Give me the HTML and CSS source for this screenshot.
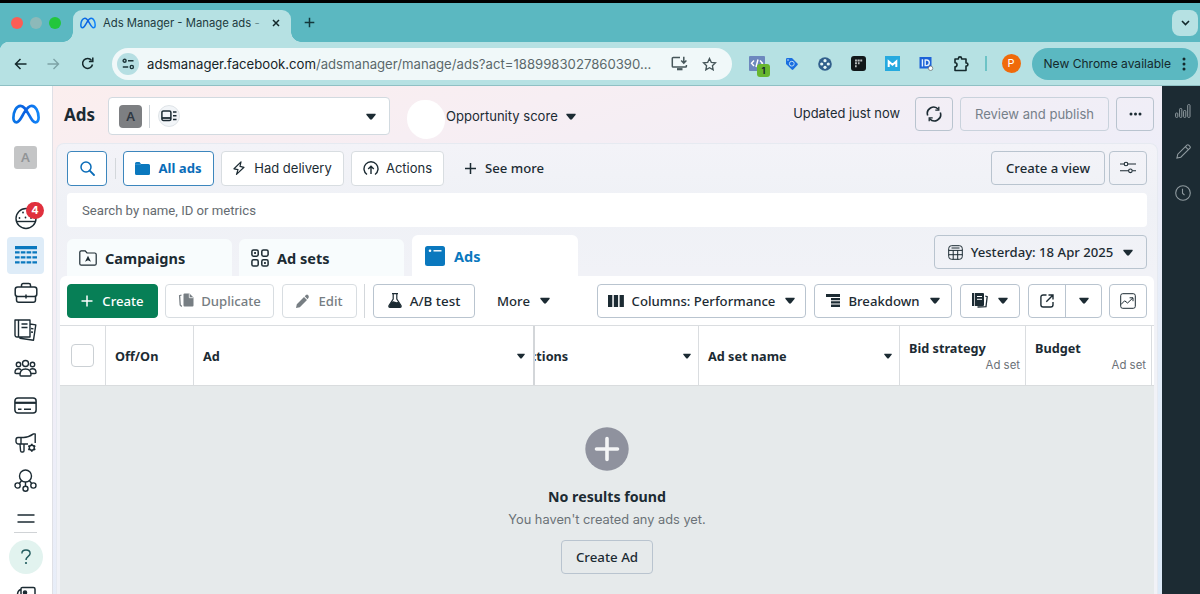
FILE: index.html
```html
<!DOCTYPE html>
<html lang="en">
<head>
<meta charset="utf-8">
<title>Ads Manager - Manage ads</title>
<link rel="stylesheet" href="styles.css">
</head>
<body>
<svg width="0" height="0" class="defs">
  <defs>
    <linearGradient id="mg" x1="0" x2="1"><stop offset="0" stop-color="#0a78e8"/><stop offset=".45" stop-color="#0a5fe0"/><stop offset="1" stop-color="#1288fa"/></linearGradient>
    <symbol id="meta" viewBox="0 0 28 20"><path d="M4.5 18.3C2.4 18.3 1.4 16.5 1.4 13.7 1.4 8 4.2 1.8 8.5 1.8c3.3 0 5.3 3.4 7.9 8 2.8 5 4.3 8.5 7 8.5 2.2 0 3.2-1.9 3.2-4.8 0-6-3-11.7-6.9-11.7-3 0-5 2.7-7.4 6.6-3.2 5.3-4.8 9.9-7.800 9.9z" fill="none" stroke="url(#mg)" stroke-width="2.700"/></symbol>
    <symbol id="caret" viewBox="0 0 10 7"><path d="M1 .7h8c.7 0 1 .7.5 1.200L6 6.200c-.6.6-1.400.6-2 0L.5 1.900C0 1.400.3.7 1 .7z" fill="#1c2b33"/></symbol>
  </defs>
</svg>
<div class="window">
  <div class="tabstrip">
    <i class="light red"></i><i class="light gray"></i><i class="light green"></i>
    <div class="tab">
      <svg class="fav" width="16" height="12"><use href="#meta"/></svg>
      <span class="tab-title">Ads Manager - Manage ads <em>-</em></span>
      <svg width="8" height="8" viewBox="0 0 8 8"><path d="M1 1l6 6M7 1l-6 6" stroke="#13282b" stroke-width="1.500"/></svg>
    </div>
    <svg class="newtab" width="11" height="11" viewBox="0 0 11 11"><path d="M5.500.7v9.600M.7 5.500h9.600" stroke="#13383c" stroke-width="1.500"/></svg>
    <div class="tabsearch"><svg width="9" height="6" viewBox="0 0 9 6"><path d="M1 1l3.500 3.500L8 1" fill="none" stroke="#13282b" stroke-width="1.600"/></svg></div>
  </div>
  <div class="toolbar">
    <svg class="nav-back" width="13" height="12" viewBox="0 0 13 12"><path d="M6.500 1L1.500 6l5 5M1.500 6H12.500" fill="none" stroke="#14292c" stroke-width="1.500"/></svg>
    <svg class="nav-fwd" width="13" height="12" viewBox="0 0 13 12"><path d="M6.500 1l5 5-5 5M11.500 6H.5" fill="none" stroke="#7da3a6" stroke-width="1.400"/></svg>
    <svg class="nav-reload" width="13" height="13" viewBox="0 0 13 13"><path d="M11.500 7.500A5 5 0 1 1 10.600 3.400M11.800.6V4.500H7.900" fill="none" stroke="#14292c" stroke-width="1.500"/></svg>
    <div class="omnibox">
      <div class="site"><svg width="13" height="12" viewBox="0 0 13 12" fill="none" stroke="#1b3438" stroke-width="1.400"><circle cx="2.600" cy="2.800" r="1.500"/><path d="M6 2.800h5.500M.8 9h5.400"/><circle cx="9.800" cy="9" r="1.600"/></svg></div>
      <span class="url">adsmanager.facebook.com<em>/adsmanager/manage/ads?act=1889983027860390...</em></span>
      <svg class="install" width="17" height="15" viewBox="0 0 17 15" fill="none" stroke="#46565a" stroke-width="1.500"><path d="M9 1.500H2.200a.9.900 0 0 0-.9.900v7.800c0 .5.400.9.900.9h12.300c.5 0 .9-.4.900-.9V9"/><path d="M12.800.8v6M10.200 4.500l2.600 2.600 2.600-2.600"/><path d="M6 13.200h5.500" stroke-width="2.200"/></svg>
      <svg width="15" height="14" viewBox="0 0 15 14"><path d="M7.500 1.400l1.800 3.900 4.200.5-3.100 2.900.8 4.200-3.700-2.100-3.700 2.100.8-4.200L1.500 5.800l4.200-.5z" fill="none" stroke="#46565a" stroke-width="1.300"/></svg>
    </div>
    <div class="exts">
      <div class="ext code"><svg width="16" height="16" viewBox="0 0 16 16"><rect width="16" height="15" rx="1" fill="#6d88be"/><path d="M5 4.500L2.500 7.300 5 10M11 4.500l2.500 2.800L11 10M9 3.500l-2 7.500" fill="none" stroke="#fff" stroke-width="1.400"/></svg><b>1</b></div>
      <svg class="ext tag" width="14" height="14" viewBox="0 0 14 14"><path d="M1 2.200Q1 1 2.200 1H7l5.500 5.500q.8.800 0 1.600l-4.200 4.400q-.8.800-1.600 0L1 7z" fill="#1a6fe0"/><circle cx="6.800" cy="6.700" r="2.400" fill="none" stroke="#b9dcf5" stroke-width="1"/><circle cx="3" cy="3" r=".7" fill="#fff"/></svg>
      <svg class="ext wheel" width="14" height="14" viewBox="0 0 14 14"><circle cx="7" cy="7" r="6.800" fill="#315f8c"/><g fill="#e6f5f6"><circle cx="7" cy="3.700" r="1.600"/><circle cx="7" cy="10.300" r="1.600"/><circle cx="3.700" cy="7" r="1.600"/><circle cx="10.300" cy="7" r="1.600"/></g></svg>
      <svg class="ext grid" width="15" height="15" viewBox="0 0 15 15"><rect width="15" height="15" rx="3" fill="#111719"/><path d="M4 3.500h7.200v2H4zM4 6.300h2v2H4zM6.800 6.300h2v2h-2zM4 9.200h1.700v2H4z" fill="#b7bcbd"/><path d="M6.400 3v6M9 3v6" stroke="#111719" stroke-width=".5"/></svg>
      <svg class="ext em" width="15" height="15" viewBox="0 0 15 15"><rect width="15" height="15" fill="#25aadf"/><path d="M3.700 11V5.500l3.800 3.200 3.800-3.200V11" fill="none" stroke="#fff" stroke-width="2"/></svg>
      <svg class="ext id" width="15" height="15" viewBox="0 0 15 15"><rect x=".5" y="1" width="12" height="11.500" fill="#1c62d8"/><path d="M3.400 3.200v7.200M6.200 4h1.300a2.700 2.700 0 0 1 0 5.600H6.200z" fill="none" stroke="#e5f1fb" stroke-width="1.400"/><circle cx="11.600" cy="12.300" r="2.200" fill="#fff" stroke="#555" stroke-width=".6"/></svg>
      <svg class="ext puzzle" width="16" height="16" viewBox="0 0 16 16"><path d="M2 3h3.400V2.500a1.600 1.600 0 0 1 3.200 0V3H13v4h.4a1.500 1.500 0 0 1 0 3H13v4.500H2v-3.800a2 2 0 0 0 0-4z" fill="none" stroke="#14292c" stroke-width="1.600" stroke-linejoin="round"/></svg>
    </div>
    <i class="vbar"></i>
    <div class="avatar">P</div>
    <div class="update"><span>New Chrome available</span><svg width="4" height="14" viewBox="0 0 4 14" fill="#14292c"><circle cx="2" cy="2" r="1.500"/><circle cx="2" cy="7" r="1.500"/><circle cx="2" cy="12" r="1.500"/></svg></div>
  </div>
  <div class="app">
    <nav class="side">
      <div class="logo"><svg width="28" height="20"><use href="#meta"/></svg></div>
      <div class="acct"><span>A</span></div>
      <div class="item"><svg width="24" height="24" viewBox="0 0 24 24" fill="none" stroke="#1c2b33" stroke-width="1.400"><circle cx="12" cy="12.500" r="10"/><path d="M2 15.500h20"/><g fill="#1c2b33" stroke="none"><circle cx="5.500" cy="12" r=".9"/><circle cx="9" cy="6.500" r=".9"/><circle cx="11.500" cy="11.500" r=".9"/><circle cx="17" cy="12" r=".9"/></g></svg><b class="badge">4</b></div>
      <div class="item active"><svg width="22" height="18" viewBox="0 0 22 18" fill="#0a78be"><path d="M0 0h22v3.300H0zM0 5.200h4.600v2.400H0zM5.800 5.200h4.600v2.400H5.800zM11.600 5.200h4.600v2.400h-4.600zM17.400 5.200H22v2.400h-4.600zM0 10.200h4.600v2.400H0zM5.800 10.200h4.600v2.400H5.800zM11.600 10.200h4.600v2.400h-4.600zM17.400 10.200H22v2.400h-4.600zM0 15.200h4.600v2.400H0zM5.800 15.200h4.600v2.400H5.800zM11.600 15.200h4.600v2.400h-4.600zM17.400 15.200H22v2.400h-4.600z"/></svg></div>
      <div class="item"><svg width="24" height="22" viewBox="0 0 24 22" fill="none" stroke="#1c2b33" stroke-width="1.500"><rect x="1.200" y="5" width="21.600" height="9.500" rx="2.500"/><path d="M7.500 5V3.200c0-1 .7-1.700 1.700-1.700h5.600c1 0 1.700.7 1.700 1.700V5M2.500 14.500v3.500c0 1.300 1 2.300 2.300 2.300h14.400c1.300 0 2.300-1 2.300-2.300v-3.500M12 12.500v4"/></svg></div>
      <div class="item"><svg width="23" height="23" viewBox="0 0 23 23" fill="none" stroke="#1c2b33" stroke-width="1.400" stroke-linejoin="round"><path d="M1 1h15v17H3c-1.200 0-2-.8-2-2zM4.500 1v17M7.500 5h6M7.500 8.500h6M16 5l5.800.9-2.300 15.300L6 19.300V18M17 9.500l2.500.4M17 13l2 .3"/></svg></div>
      <div class="item"><svg width="23" height="18" viewBox="0 0 23 18" fill="none" stroke="#1c2b33" stroke-width="1.400"><circle cx="11.500" cy="4.500" r="3"/><circle cx="4.500" cy="5.500" r="2.200"/><circle cx="18.500" cy="5.500" r="2.200"/><path d="M6 16c0-4 2-6 5.500-6s5.500 2 5.500 6c0 .6-.5 1-1 1H7c-.6 0-1-.4-1-1zM6 14.500H2c-.6 0-1-.4-1-1C1 11 2.500 9.800 4.500 9.800c1 0 1.800.3 2.500.9M17 14.500h4c.6 0 1-.4 1-1 0-2.500-1.500-3.700-3.500-3.700-1 0-1.800.3-2.500.9"/></svg></div>
      <div class="item"><svg width="23" height="17" viewBox="0 0 23 17" fill="none" stroke="#1c2b33" stroke-width="1.500"><rect x=".9" y=".9" width="21.200" height="15.200" rx="3"/><path d="M1 5.800h21" stroke-width="2.200"/><path d="M4 12.300h3.500M10 12.300h7"/></svg></div>
      <div class="item"><svg width="22" height="20" viewBox="0 0 22 20" fill="none" stroke="#1c2b33" stroke-width="1.400" stroke-linejoin="round"><path d="M3 4.500h5.500C13 4.500 15.500 3 18.500.9h1.700v9M13 11H3.500A2.500 2.500 0 0 1 1 8.500V7c0-1.500.8-2.500 2-2.500M6 4.500V11M5 11.500l.6 6.500c.1.600.6 1 1.200 1h1c.8 0 1.200-.5 1.200-1.200V11.500"/><circle cx="16.800" cy="14.800" r="2.500"/><path d="M16.800 10.800v1.500M16.800 17.300v1.500M13.300 12.800l1.300.7M19 16l1.300.8M20.300 12.800l-1.300.7M14.600 16l-1.300.8" stroke-width="1.700"/></svg></div>
      <div class="item"><svg width="23" height="23" viewBox="0 0 23 23" fill="none" stroke="#1c2b33" stroke-width="1.400"><circle cx="11.500" cy="7" r="6"/><circle cx="3.600" cy="16.500" r="2.600"/><circle cx="11.500" cy="19.800" r="2.500"/><circle cx="19.400" cy="16.500" r="2.600"/><path d="M7.500 11.800l-2 2.500M11.500 13v4.300M15.500 11.800l2 2.500"/></svg></div>
      <div class="item lines"><svg width="18" height="9" viewBox="0 0 18 9"><path d="M.5 1h17M.5 8h17" stroke="#1c2b33" stroke-width="1.400"/></svg></div>
      <div class="help"><svg width="10" height="16" viewBox="0 0 10 16"><path d="M.9 4.500C.9 2.400 2.500 1 5 1s4.100 1.400 4.100 3.500C9.100 7.400 5 7.400 5 11" fill="none" stroke="#205a5d" stroke-width="1.400"/><circle cx="5" cy="14" r="1.100" fill="#205a5d"/></svg></div>
      <svg class="news" width="20" height="16" viewBox="0 0 20 16" fill="none" stroke="#1c2b33" stroke-width="1.500"><path d="M5 16V3c0-1 .7-1.600 1.600-1.600h10.800c1 0 1.600.7 1.600 1.600v13M5 3.500C2.500 4 1.500 6 1.500 9v7"/><circle cx="9" cy="6.500" r="1.500" fill="#1c2b33"/></svg>
    </nav>
    <main class="main">
      <header class="head">
        <h1>Ads</h1>
        <div class="select"><span class="abox">A</span><i></i><span class="biz"><svg width="16" height="12" viewBox="0 0 16 12" fill="none" stroke="#1c2b33" stroke-width="1.500"><rect x=".9" y=".9" width="9" height="9.600" rx="1.500"/><path d="M1 8h9" stroke-width="1.800"/><path d="M12 2h3.500M12 5.800h3.500M12 9.600h3.500"/></svg></span><svg class="caret" width="10" height="7"><use href="#caret"/></svg></div>
        <i class="blob"></i>
        <span class="opp">Opportunity score</span><svg class="opp-caret" width="10" height="7"><use href="#caret"/></svg>
        <span class="updated">Updated just now</span>
        <button class="btn refresh"><svg width="16" height="16" viewBox="0 0 16 16" fill="none" stroke="#1c2b33" stroke-width="1.600"><path d="M1.700 9.500A6.300 6.300 0 0 1 12.300 3.200M14.300 6.500A6.300 6.300 0 0 1 3.700 12.800"/><path d="M12.800.8v3.400H9.300M3.200 15.200v-3.400h3.500" stroke-width="1.300"/></svg></button>
        <button class="btn review">Review and publish</button>
        <button class="btn dots"><svg width="13" height="4" viewBox="0 0 13 4" fill="#1c2b33"><circle cx="2" cy="2" r="1.500"/><circle cx="6.500" cy="2" r="1.500"/><circle cx="11" cy="2" r="1.500"/></svg></button>
      </header>
      <section class="panel">
        <div class="filters">
          <button class="btn white blue search"><svg width="15" height="15" viewBox="0 0 15 15" fill="none" stroke="#0a6cb8" stroke-width="1.500"><circle cx="6" cy="6" r="5"/><path d="M9.700 9.700l4.300 4.300" stroke-linecap="round" stroke-width="1.800"/></svg></button>
          <i class="sep"></i>
          <button class="btn white blue all"><svg width="15" height="13" viewBox="0 0 15 13"><path d="M0 1.500Q0 0 1.500 0h3L6 2h7.500Q15 2 15 3.500v8q0 1.500-1.500 1.500h-12Q0 13 0 11.500z" fill="#0a78be"/><path d="M0 2.300h6" stroke="#62aad8" stroke-width=".6"/></svg><span>All ads</span></button>
          <button class="btn white pale had"><svg width="12" height="14" viewBox="0 0 12 14"><path d="M8 .9L1 7.800l4 .8-1.500 4.800L11 6.300l-4-.9z" fill="none" stroke="#1c2b33" stroke-width="1.200" stroke-linejoin="round"/></svg><span>Had delivery</span></button>
          <button class="btn white pale act"><svg width="16" height="15" viewBox="0 0 16 15" fill="none" stroke="#1c2b33" stroke-width="1.400"><path d="M4 13.500A7 7 0 1 1 12 13.500M8 13V5.500M5.200 8L8 5.200 10.800 8"/></svg><span>Actions</span></button>
          <span class="seemore"><svg width="11" height="11" viewBox="0 0 11 11"><path d="M5.500 0v11M0 5.500h11" stroke="#1c2b33" stroke-width="1.500"/></svg><span>See more</span></span>
          <button class="btn view">Create a view</button>
          <button class="btn tune"><svg width="16" height="13" viewBox="0 0 16 13" fill="none" stroke="#1c2b33" stroke-width="1.100"><path d="M0 3h4.200M8 3h8M0 9.800h8.500M12.300 9.800H16"/><circle cx="6" cy="3" r="1.800"/><circle cx="10.400" cy="9.800" r="1.800"/></svg></button>
        </div>
        <div class="searchbar">Search by name, ID or metrics</div>
        <div class="tabs">
          <div class="ptab camp"><svg width="18" height="16" viewBox="0 0 18 16"><path d="M.8 2.300C.8 1.400 1.400.8 2.300.8h3.900L8 3h7.700c.9 0 1.500.6 1.500 1.500v9.200c0 .9-.6 1.500-1.500 1.500H2.300c-.9 0-1.500-.6-1.500-1.500z" fill="none" stroke="#1c2b33" stroke-width="1.200"/><path d="M9 5.800l3 6-3-1.500-3 1.500z" fill="#1c2b33"/></svg><span>Campaigns</span></div>
          <div class="ptab sets"><svg width="18" height="18" viewBox="0 0 18 18" fill="none" stroke="#1c2b33" stroke-width="1.500"><rect x=".9" y=".9" width="6.300" height="6.300" rx="1.600"/><rect x="10.800" y=".9" width="6.300" height="6.300" rx="1.600"/><rect x=".9" y="10.800" width="6.300" height="6.300" rx="1.600"/><rect x="10.800" y="10.800" width="6.300" height="6.300" rx="1.600"/><path d="M3.200 4h1.700M13.100 14h1.700" stroke-width="2"/></svg><span>Ad sets</span></div>
          <div class="ptab on"><svg width="20" height="20" viewBox="0 0 20 20"><rect width="20" height="20" rx="2.500" fill="#0a78be"/><circle cx="5" cy="4.800" r="1.300" fill="#fff"/><path d="M8.500 4.800h8" stroke="#fff" stroke-width="1.400"/></svg><span>Ads</span></div>
          <button class="btn date"><svg width="15" height="15" viewBox="0 0 15 15" fill="none" stroke="#1c2b33" stroke-width="1"><rect x=".7" y=".7" width="13.600" height="13.600" rx="2.800"/><path d="M.7 5.400h13.600M.7 9.700h13.600M5.200 5.400v8.900M9.700 5.400v8.900M3.500 3h8"/></svg><span>Yesterday: 18 Apr 2025</span><svg width="10" height="7"><use href="#caret"/></svg></button>
        </div>
        <div class="sheet">
          <div class="actions">
            <button class="btn create"><svg width="12" height="12" viewBox="0 0 12 12"><path d="M6 .5v11M.5 6h11" stroke="#fff" stroke-width="1.500"/></svg><span>Create</span></button>
            <button class="btn white pale dim dup"><svg width="16" height="15" viewBox="0 0 16 15"><path d="M6.500.5h5L15.500 4.500v8q0 1-1 1h-8q-1 0-1-1V1.500q0-1 1-1z" fill="#777e83"/><path d="M11.300.5v4.200h4.200" fill="none" stroke="#fff" stroke-width=".8"/><path d="M3.500 2L1.600 2.600 2.200 12l1.600 1.500" fill="none" stroke="#777e83" stroke-width="1.300"/></svg><span>Duplicate</span></button>
            <button class="btn white pale dim edit"><svg width="13" height="14" viewBox="0 0 13 14" fill="#777e83"><path d="M0 14l.8-3.800L8 3l3 3-7.200 7.200zM8.700 2.300L10 1q1-1 2 0t.8 2.200L11.600 5.200z"/></svg><span>Edit</span></button>
            <i class="sep"></i>
            <button class="btn white ab"><svg width="14" height="15" viewBox="0 0 14 15"><path d="M4 .7h6M5.200 1v5L1 12.500q-.6 1.800 1 1.800h10q1.600 0 1-1.800L8.800 6V1" fill="none" stroke="#1c2b33" stroke-width="1.200"/><path d="M3.500 8.700q1.700-.9 3.500 0t3.500 0L13 13q0 1.300-1.200 1.300H2.200Q1 14.300 1 13z" fill="#1c2b33"/></svg><span>A/B test</span></button>
            <span class="more">More<svg width="10" height="7"><use href="#caret"/></svg></span>
            <button class="btn white cols"><svg width="16" height="12" viewBox="0 0 16 12" fill="#1c2b33"><path d="M0 0h4.300v12H0zM5.800 0h4.300v12H5.800zM11.600 0h4.300v12h-4.300z"/></svg><span>Columns: Performance</span><svg width="10" height="7"><use href="#caret"/></svg></button>
            <button class="btn white brk"><svg width="14" height="13" viewBox="0 0 14 13" fill="#1c2b33"><path d="M0 0h14v3H0zM5 3.900h9v2.400H5zM5 7.200h9v2.400H5zM5 10.500h9v2.500H5z"/></svg><span>Breakdown</span><svg width="10" height="7"><use href="#caret"/></svg></button>
            <button class="btn white rep"><svg width="16" height="15" viewBox="0 0 16 15"><path d="M0 0h2v13H0zM2.700 0H11q1 0 1 1v11q0 1-1 1H2.700z" fill="#1c2b33"/><path d="M5 3.500h5M5 6.300h5" stroke="#fff" stroke-width="1"/><path d="M13.200 3l2 .6-1.200 10-8.500.4" fill="none" stroke="#1c2b33" stroke-width="1.300"/></svg><svg width="10" height="7"><use href="#caret"/></svg></button>
            <div class="split"><button><svg width="14" height="14" viewBox="0 0 14 14" fill="none" stroke="#1c2b33" stroke-width="1.400"><path d="M6.500 1H3.200C1.800 1 .9 1.900.9 3.200v7.500c0 1.400.9 2.300 2.300 2.300h7.500c1.400 0 2.300-.9 2.300-2.300V8M8.500 1H13v4.500M13 1L6.300 7.700"/></svg></button><button><svg width="10" height="7"><use href="#caret"/></svg></button></div>
            <button class="btn white chart"><svg width="16" height="16" viewBox="0 0 16 16" fill="none" stroke="#1c2b33" stroke-width="1"><rect x=".7" y=".7" width="14.600" height="14.600" rx="2"/><path d="M1 11.500l3.600-3.700 3 2.200L12.800 5M9.600 4.800H13v3.400"/></svg></button>
          </div>
          <div class="thead">
            <div class="th c1"><i class="check"></i></div>
            <div class="th c2">Off/On</div>
            <div class="th c3">Ad<svg width="8" height="6"><use href="#caret"/></svg></div>
            <div class="th c4"><span class="clip"><span>Actions</span></span><svg width="8" height="6"><use href="#caret"/></svg></div>
            <div class="th c5">Ad set name<svg width="8" height="6"><use href="#caret"/></svg></div>
            <div class="th c6"><span>Bid strategy</span><small>Ad set</small></div>
            <div class="th c6"><span>Budget</span><small>Ad set</small></div>
          </div>
          <div class="empty">
            <svg width="44" height="44" viewBox="0 0 44 44"><circle cx="22" cy="22" r="21.700" fill="#8f929e"/><path d="M22 11.500v21M11.500 22h21" stroke="#f4f5f6" stroke-width="3.600" stroke-linecap="round"/></svg>
            <h2>No results found</h2>
            <p>You haven't created any ads yet.</p>
            <button class="btn createad">Create Ad</button>
          </div>
        </div>
      </section>
    </main>
    <aside class="rail">
      <svg width="16" height="14" viewBox="0 0 16 14" fill="none" stroke="#8f9a9f" stroke-width="1"><rect x=".6" y="9" width="2.200" height="4.400" rx=".8"/><rect x="4.600" y="4.500" width="2.200" height="8.900" rx=".8"/><rect x="8.600" y="6.500" width="2.200" height="6.900" rx=".8"/><rect x="12.700" y=".6" width="2.300" height="12.800" rx=".8"/></svg>
      <svg width="15" height="15" viewBox="0 0 15 15" fill="none" stroke="#8f9a9f" stroke-width="1.100"><path d="M.9 14.100l.9-3.900L10.900 1.100q.9-.8 1.800 0l1.200 1.200q.8.900 0 1.800L4.800 13.200zM9.300 2.700l3 3"/></svg>
      <svg width="16" height="16" viewBox="0 0 16 16" fill="none" stroke="#8f9a9f" stroke-width="1.100"><circle cx="8" cy="8" r="7.300"/><path d="M7.500 3.800v4.400l2 2"/></svg>
    </aside>
  </div>
</div>
</body>
</html>
```
FILE: styles.css
```css
* { box-sizing: border-box; }
body { margin: 0; font-family: "Noto Sans", Inter, sans-serif; font-size: 13.150px; color: #1c2b33; background: #000; overflow: hidden; }
em { font-style: normal; }
svg { display: block; flex: none; }
button { font: inherit; color: inherit; margin: 0; padding: 0; background: none; border: 0; }
.defs { position: absolute; }
.window { height: 594px; padding-top: 3px; display: flex; flex-direction: column; }

.tabstrip { height: 39px; flex: none; background: #5bb8c1; display: flex; align-items: center; padding: 0 2px 0 11px; }
.light { width: 12px; height: 12px; border-radius: 50%; margin-right: 7px; }
.red { background: #fb5d55; }
.gray { background: #8db9b9; }
.green { background: #23c63c; }
.tab { position: relative; width: 218px; height: 32px; margin: 7px 0 0 5px; background: #b6e1e3; border-radius: 9px 9px 0 0; display: flex; align-items: center; padding: 0 11px 7px 7px; font: 400 11.300px Inter, sans-serif; color: #1d3b40; }
.tab::before, .tab::after { content: ""; position: absolute; bottom: 0; width: 10px; height: 10px; }
.tab::before { left: -10px; background: radial-gradient(circle at 0 0, transparent 9.500px, #b6e1e3 10px); }
.tab::after { right: -10px; background: radial-gradient(circle at 100% 0, transparent 9.500px, #b6e1e3 10px); }
.tab-title { flex: 1; margin-left: 7px; white-space: nowrap; }
.tab-title em { opacity: .5; }
.newtab { margin-left: 13px; }
.tabsearch { width: 26px; height: 26px; border-radius: 8px; background: #b6e1e3; margin-left: auto; display: grid; place-items: center; }

.toolbar { height: 44px; flex: none; background: radial-gradient(circle at 9px 9px, #b6e1e3 9px, #5bb8c1 9.500px) 0 0 / 9px 9px no-repeat, #b6e1e3; border-bottom: 1px solid #8fc0c4; display: flex; align-items: center; padding-left: 14px; font-family: Inter, sans-serif; color: #14292c; }
.nav-fwd { margin-left: 20px; }
.nav-reload { margin-left: 21px; }
.omnibox { width: 620px; height: 32px; margin-left: 18px; border-radius: 16px; background: #f0f8f9; display: flex; align-items: center; padding: 0 15px 0 5px; }
.site { width: 22px; height: 22px; flex: none; border-radius: 50%; background: #b6dfe3; display: grid; place-items: center; }
.url { flex: 1; margin-left: 8px; font-size: 13.150px; white-space: nowrap; color: #152427; }
.url em { color: #5b686b; }
.install { margin-right: 14px; }
.exts { display: flex; align-items: center; margin-left: 17px; gap: 19px; }
.code { position: relative; width: 17px; height: 16px; }
.code b { position: absolute; left: 8px; top: 8px; width: 13px; height: 13px; border-radius: 3px; background: #68b62f; font: 700 9px/13px Inter, sans-serif; text-align: center; }
.vbar { width: 1.500px; height: 15px; background: #6cc3c6; margin-left: 16px; }
.avatar { width: 19px; height: 19px; border-radius: 50%; background: #f06a0a; color: #fff; font-size: 11px; line-height: 19px; text-align: center; margin-left: 15px; }
.update { width: 166px; height: 32px; border-radius: 16px; background: #5bb8c1; margin-left: 11px; display: flex; align-items: center; justify-content: space-between; padding: 0 12px 0 12px; font-size: 12.050px; white-space: nowrap; }

.app { flex: 1; min-height: 0; display: flex; }
.side { width: 53px; flex: none; background: #fff; border-right: 1px solid #dfe0e6; display: flex; flex-direction: column; align-items: center; padding-right: 1px; overflow: hidden; }
.logo { height: 56px; display: grid; place-items: center; flex: none; }
.acct { height: 30px; flex: none; display: grid; place-items: center; margin-bottom: 27px; }
.acct span { width: 23px; height: 23px; border-radius: 3px; background: #c4c5c6; color: #919496; font-weight: 600; line-height: 23px; text-align: center; }
.item { position: relative; width: 37px; height: 37.600px; flex: none; display: grid; place-items: center; }
.item.active { background: #deecf8; border-radius: 4px; }
.badge { position: absolute; left: 19px; top: 3px; width: 18px; height: 17px; border-radius: 9px; background: #e0303d; color: #fff; font: 700 11px/17px Inter, sans-serif; text-align: center; }
.lines { width: 24px; }
.lines::after { content: ""; position: absolute; bottom: 4px; width: 23px; height: 1px; background: #d0d3d6; }
.help { width: 34px; height: 34px; border-radius: 50%; background: #e2f3ef; display: grid; place-items: center; margin-top: 3px; flex: none; }
.news { margin-top: 12px; }

.main { width: 1109px; flex: none; padding-left: 3px; display: flex; flex-direction: column; background: linear-gradient(165deg, #fbeeee 0, #f7eef3 18%, #eeeef8 45%, #e3edf9 75%, #dceaf8 100%); }
.head { height: 57px; flex: none; display: flex; align-items: center; padding: 0 8px 2px 8px; }
h1 { margin: 2px 0 0; font-size: 17px; line-height: 20px; font-weight: 700; width: 44px; }
.btn { height: 34px; border: 1px solid #b9c4cf; border-radius: 4px; display: flex; align-items: center; justify-content: center; white-space: nowrap; font-weight: 500; flex: none; }
.select { width: 282px; height: 38px; margin-top: 5px; background: #fff; border: 1px solid #d2dae0; border-radius: 4px; display: flex; align-items: center; padding: 0 13px 0 10px; }
.abox { width: 23px; height: 23px; border-radius: 4px; background: #7d7f82; color: #2f3843; font: 600 13px/23px "Noto Sans", sans-serif; text-align: center; }
.select i { width: 1px; height: 23px; background: #cdd3d8; margin: 0 8px 0 7px; }
.biz { width: 22px; height: 22px; border-radius: 50%; background: #f2f5f8; border: 1px solid #dfe4e8; display: grid; place-items: center; }
.caret { margin-left: auto; }
.blob { width: 38px; height: 39px; border-radius: 46% 50% 48% 52%; background: #fff; margin: 11px 2px 0 17px; }
.opp { font: 400 13.050px Inter, sans-serif; width: 120px; margin: 5px 0 0 -1px; white-space: nowrap; }
.opp-caret { margin-top: 5px; }
.updated { margin-left: auto; font: 400 12.900px Inter, sans-serif; white-space: nowrap; }
.refresh { width: 38px; margin-left: 15px; }
.review { width: 149px; margin-left: 7px; color: #76808a; border-color: #c9d2dc; font-family: Inter, sans-serif; font-weight: 400; font-size: 13.050px; }
.dots { width: 38px; margin-left: 7px; }

.panel { width: 1102px; flex: 1; min-height: 0; display: flex; flex-direction: column; padding: 6px 3px 0 3px; background: linear-gradient(#f3f3f8, #eff1f6 60px, #f1f2f7 130px); border: solid #e6eaf1; border-width: 1px 1px 0; border-radius: 8px 8px 0 0; }
.filters { height: 36px; flex: none; display: flex; align-items: center; padding: 0 7px 0 7px; }
.filters .btn { height: 35px; }
.white { background: #fff; }
.blue { border-color: #3c86bd; color: #0a6cb8; }
.pale { border-color: #d8dde1; }
.search { width: 40px; }
.sep { width: 1px; height: 21px; background: #d3d7db; }
.filters .sep { margin: 0 7px 0 8px; }
.all { width: 91px; gap: 8px; font-weight: 700; }
.had { width: 123px; margin-left: 7px; gap: 9px; font: 400 13px Inter, sans-serif; }
.act { width: 93px; margin-left: 7px; gap: 7px; font: 400 13px Inter, sans-serif; }
.seemore { display: flex; align-items: center; gap: 9px; margin-left: 21px; font-weight: 500; }
.filters .view { width: 114px; height: 34px; margin: 0 0 1px auto; }
.filters .tune { width: 38px; height: 34px; margin: 0 0 1px 4px; }
.searchbar { height: 34px; flex: none; margin: 7px 7px 0 7px; background: #fff; border-radius: 4px; padding: 0 15px; font: 400 13.150px/35px Roboto, sans-serif; color: #656b70; }
.tabs { height: 49px; flex: none; display: flex; align-items: flex-end; padding: 0 7px 0 7px; gap: 7px; }
.ptab { width: 165px; height: 37px; border-radius: 6px 6px 0 0; background: #f8fcfd; display: flex; align-items: center; gap: 8px; padding: 0 12px; font-size: 14.500px; font-weight: 700; }
.on { width: 166px; height: 41px; margin-left: 1px; background: #fff; color: #0a78be; padding-left: 13px; gap: 9px; }
.date { width: 213px; margin: 0 0 7px auto; gap: 8px; }
.sheet { flex: 1; min-height: 0; display: flex; flex-direction: column; background: #fff; border-radius: 6px 6px 0 0; overflow: hidden; }
.actions { height: 49px; flex: none; display: flex; align-items: center; padding: 0 7px 0 7px; }
.create { width: 91px; gap: 9px; background: #077f56; border-color: #077f56; color: #fff; }
.dim { color: #767d82; }
.dup { width: 109px; gap: 7px; margin-left: 7px; }
.edit { width: 75px; gap: 9px; margin-left: 8px; }
.actions .sep { height: 34px; margin: 0 8px 0 7px; }
.ab { width: 102px; gap: 8px; font-size: 13.400px; }
.more { display: flex; align-items: center; justify-content: space-between; width: 53px; margin-left: 22px; font-weight: 500; }
.cols { width: 209px; gap: 8px; margin-left: auto; }
.brk { width: 138px; gap: 8px; margin-left: 8px; }
.brk span, .cols span, .date span { margin-right: 2px; }
.rep { width: 60px; gap: 10px; margin-left: 8px; }
.split { width: 74px; height: 34px; margin-left: 8px; border: 1px solid #b9c4cf; border-radius: 4px; display: grid; grid-template-columns: 1fr 1fr; }
.split button { display: grid; place-items: center; }
.split button + button { border-left: 1px solid #b9c4cf; }
.chart { width: 38px; margin-left: 7px; }
.thead { height: 61px; flex: none; display: flex; border-top: 1px solid #dadde0; border-bottom: 1px solid #d9dcde; font-weight: 700; font-size: 12.700px; }
.th { border-right: 1px solid #dadde0; display: flex; align-items: center; justify-content: space-between; flex: none; padding: 0 7px 0 9px; white-space: nowrap; }
.c1 { width: 46px; padding: 0; justify-content: center; }
.check { width: 23px; height: 23px; border: 1px solid #cbd0d4; border-radius: 4px; background: #fff; }
.c2 { width: 88px; }
.c3 { width: 341px; border-right: 2px solid #d3d6d9; padding-right: 8px; }
.c4 { width: 164px; padding-left: 0; }
.clip { width: 40px; overflow: hidden; display: flex; justify-content: flex-start; }
.clip span { margin-left: -14px; }
.c5 { width: 201px; }
.c6 { width: 126px; flex-direction: column; align-items: flex-start; justify-content: center; padding-right: 5px; }
.c6 span { line-height: 18px; }
.c6 small { align-self: flex-end; font: 400 11.400px/16px Inter, sans-serif; color: #6b7177; }
.empty { flex: 1; min-height: 0; background: #e6eaeb; display: flex; flex-direction: column; align-items: center; padding-top: 41px; }
h2 { margin: 16px 0 0; font-size: 14.200px; line-height: 20px; font-weight: 700; }
.empty p { margin: 3px 0 0; font: 400 12.800px/19px Inter, sans-serif; color: #6b7277; }
.createad { width: 92px; margin-top: 11px; font-size: 13.300px; }

.rail { flex: 1; background: #1c2b33; display: flex; flex-direction: column; align-items: center; padding: 18px 0 0 4px; gap: 26px; }
```
